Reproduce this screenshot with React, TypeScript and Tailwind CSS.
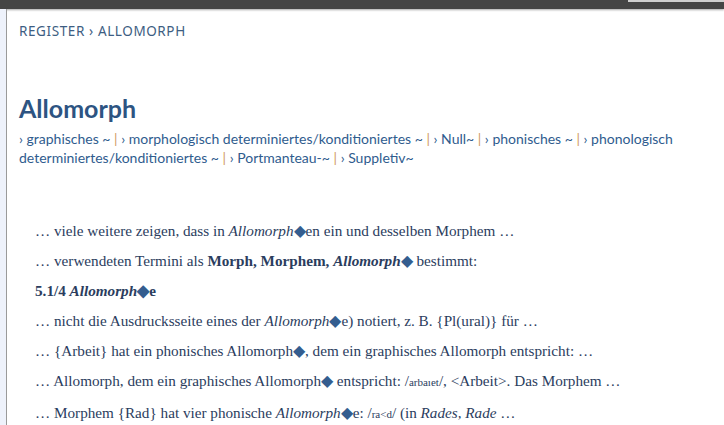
import React from "react";

const D = () => <span className="text-[#345d8f] text-[16px] leading-[0]">◆</span>;
const Pipe = () => <span className="text-[#cf9a63]"> | </span>;

export default function App() {
  const links = [
    "graphisches ~",
    "morphologisch determiniertes/konditioniertes ~",
    "Null~",
    "phonisches ~",
  ];
  return (
    <div className="w-[724px] h-[425px] overflow-hidden bg-white flex flex-col">
      <div className="h-[9px] bg-[#454545] flex justify-end shadow-[0_1px_2px_rgba(0,0,0,0.35)] shrink-0">
        <div className="w-[96px] h-[2px] bg-[#cfcfcf]" />
      </div>
      <div className="flex flex-1">
        <div className="w-[6px] bg-[#eef2fb] shrink-0" />
        <div className="w-[1px] bg-[#9a9a9a] shrink-0" />
        <div className="flex-1 pl-[12px]">
          <div className="pt-[12px] text-[13.5px] tracking-[0.6px] text-[#3d5d82] font-['Noto_Sans',sans-serif] leading-[20px]">
            REGISTER › ALLOMORPH
          </div>
          <h1 className="mt-[52px] text-[25px] leading-[30px] font-bold text-[#2d5482] font-['Lato',sans-serif]">
            Allomorph
          </h1>
          <div className="mt-[6px] text-[14px] leading-[19px] text-[#2f5c8e] font-['Lato',sans-serif]">
            {links.map((l, i) => (
              <span key={i}>
                › {l}
                <Pipe />
              </span>
            ))}
            › phonologisch
            <br />
            determiniertes/konditioniertes ~<Pipe />› Portmanteau-~<Pipe />› Suppletiv~
          </div>
          <div className="mt-[54px] pl-[16px] font-['Liberation_Serif',serif] text-[15.2px] text-[#2b3d5e] flex flex-col gap-[11px] leading-[19px]">
            <div>… viele weitere zeigen, dass in <i>Allomorph</i><D />en ein und desselben Morphem …</div>
            <div>… verwendeten Termini als <b>Morph, Morphem, <i>Allomorph</i></b><D /> bestimmt:</div>
            <div className="font-bold">5.1/4 <i>Allomorph</i><D />e</div>
            <div>… nicht die Ausdrucksseite eines der <i>Allomorph</i><D />e) notiert, z. B. {"{"}Pl(ural){"}"} für …</div>
            <div>… {"{"}Arbeit{"}"} hat ein phonisches Allomorph<D />, dem ein graphisches Allomorph entspricht: …</div>
            <div>… Allomorph, dem ein graphisches Allomorph<D /> entspricht: /<span className="text-[11px]">arbaıet</span>/, &lt;Arbeit&gt;. Das Morphem …</div>
            <div>… Morphem {"{"}Rad{"}"} hat vier phonische <i>Allomorph</i><D />e: /<span className="text-[11px]">ra&lt;d</span>/ (in <i>Rades, Rade</i> …</div>
          </div>
        </div>
      </div>
    </div>
  );
}
